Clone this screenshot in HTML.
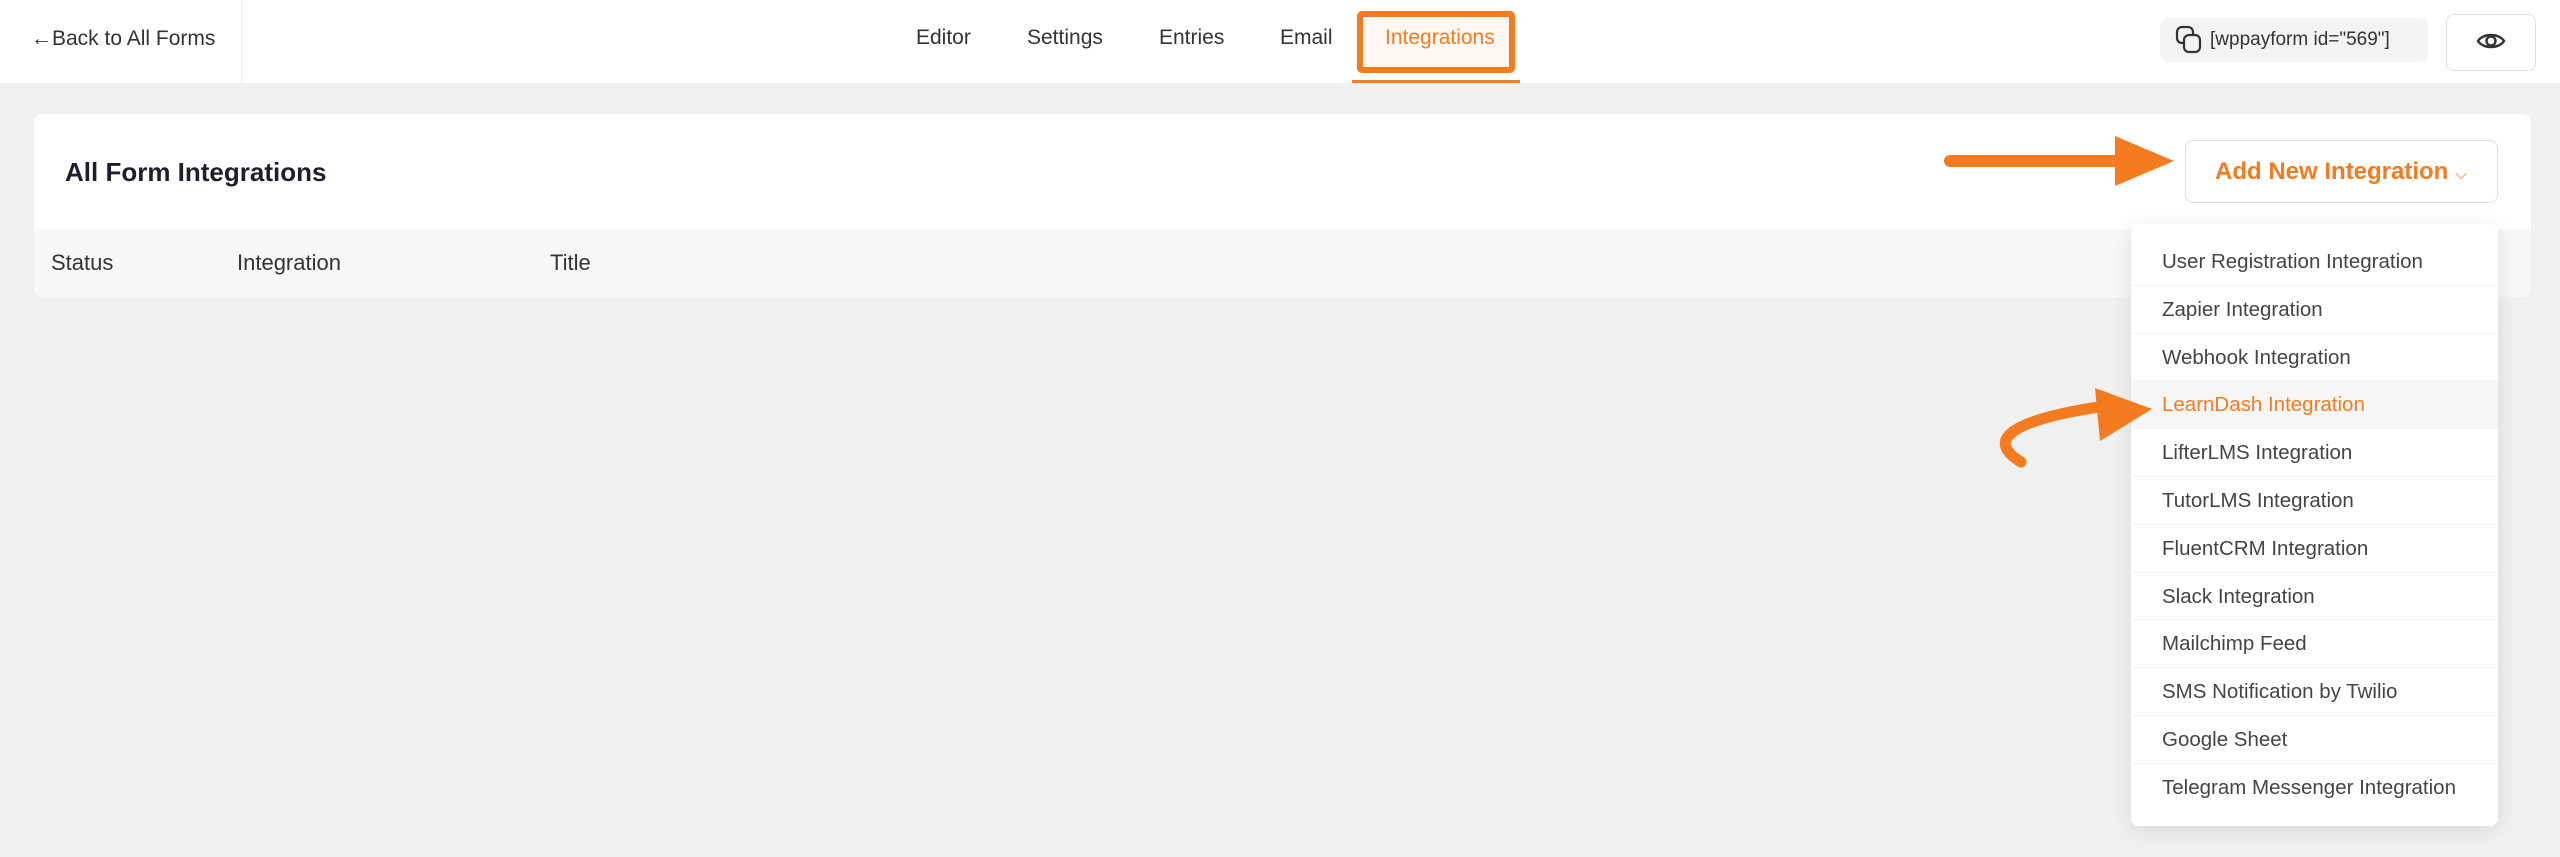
<!DOCTYPE html>
<html><head><meta charset="utf-8"><style>
*{box-sizing:border-box;margin:0;padding:0}
body{width:2560px;height:857px;background:#f0f0f1;font-family:"Liberation Sans",sans-serif;position:relative;overflow:hidden;color:#1e1e2d}
.hdr{position:absolute;left:0;top:0;width:2560px;height:83px;background:#fff}
.back{position:absolute;left:4px;top:0;width:238px;height:83px;border-right:1px solid #f0f0f0;font-size:21px;color:#333;padding:27px 0 0 27px}
.tab{position:absolute;top:26px;font-size:21px;color:#333}
.abs{position:absolute}
.card{position:absolute;left:34px;top:114px;width:2497px;height:183px;background:#fff;border-radius:8px;overflow:hidden}
.th{position:absolute;left:0;top:115px;width:100%;height:68px;background:#f6f7f9}
.th span{position:absolute;top:21px;font-size:22px;color:#333}
.btn{position:absolute;left:2185px;top:140px;width:313px;height:63px;border:1px solid #dcdfe6;border-radius:8px;background:#fff;color:#f47b20;font-size:24px;font-weight:bold;padding:17px 0 0 29px}
.dd{position:absolute;left:2131px;top:224px;width:367px;height:602px;background:#fff;border-radius:8px;box-shadow:0 4px 20px rgba(0,0,0,.1);padding-top:14px}
.it{height:47.8px;line-height:47.8px;padding-left:31px;font-size:20.5px;color:#444;border-bottom:1px solid #f3f3f3}
.it.on{background:#f6f6f6;color:#f47b20}
</style></head><body>
<div class="hdr">
<div class="back">←Back to All Forms</div>
<div class="tab" style="left:916px">Editor</div>
<div class="tab" style="left:1027px">Settings</div>
<div class="tab" style="left:1159px">Entries</div>
<div class="tab" style="left:1280px">Email</div>
<div class="abs" style="left:1357px;top:11px;width:158px;height:62px;border:6px solid #f47b20;border-radius:5px;background:#fff8f2"></div>
<div class="tab" style="left:1385px;color:#f47b20">Integrations</div>
<div class="abs" style="left:1352px;top:80px;width:168px;height:3px;background:#f47b20"></div>
<div class="abs" style="left:2160px;top:18px;width:268px;height:44px;background:#f2f3f5;border-radius:8px;font-size:19px;color:#333;padding:11px 0 0 50px">[wppayform id="569"]</div>
<svg class="abs" style="left:2175px;top:25px" width="28" height="30" viewBox="0 0 28 30" fill="none" stroke="#333" stroke-width="2.2"><rect x="2" y="2" width="16" height="16" rx="5"/><rect x="9" y="10" width="16" height="17" rx="5" fill="#f2f3f5"/></svg>
<div class="abs" style="left:2446px;top:14px;width:90px;height:57px;border:1px solid #dcdfe6;border-radius:8px;background:#fff"></div>
<svg class="abs" style="left:2476px;top:30px" width="30" height="22" viewBox="0 0 30 22" fill="none" stroke="#333" stroke-width="2.4"><path d="M2 11C7 3 23 3 28 11C23 19 7 19 2 11Z"/><circle cx="15" cy="11" r="4.5"/></svg>
</div>
<div class="card">
<div class="abs" style="left:31px;top:43px;font-size:26px;font-weight:bold;color:#1e1e2d">All Form Integrations</div>
<div class="th"><span style="left:17px">Status</span><span style="left:203px">Integration</span><span style="left:516px">Title</span></div>
</div>
<div class="btn">Add New Integration <span style="font-size:16px;font-weight:normal">⌵</span></div>
<div class="dd">
<div class="it">User Registration Integration</div>
<div class="it">Zapier Integration</div>
<div class="it">Webhook Integration</div>
<div class="it on">LearnDash Integration</div>
<div class="it">LifterLMS Integration</div>
<div class="it">TutorLMS Integration</div>
<div class="it">FluentCRM Integration</div>
<div class="it">Slack Integration</div>
<div class="it">Mailchimp Feed</div>
<div class="it">SMS Notification by Twilio</div>
<div class="it">Google Sheet</div>
<div class="it" style="border:none">Telegram Messenger Integration</div>
</div>
<svg class="abs" style="left:0;top:0" width="2560" height="857" fill="none">
<path d="M1950 161H2125" stroke="#f47b20" stroke-width="12" stroke-linecap="round"/>
<path d="M2115 136L2174 161L2115 186Z" fill="#f47b20"/>
<path d="M2021 462C1985 440 2010 420 2105 406" stroke="#f47b20" stroke-width="11" stroke-linecap="round"/>
<path d="M2095 388L2152 409L2100 441Z" fill="#f47b20"/>
</svg>
</body></html>
